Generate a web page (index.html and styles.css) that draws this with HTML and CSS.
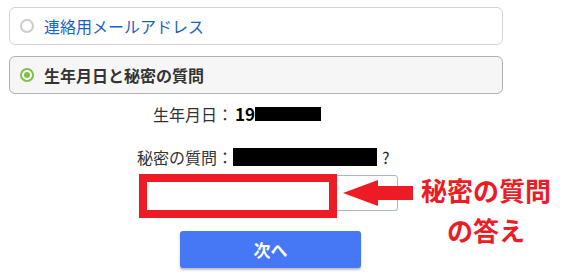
FILE: index.html
```html
<!DOCTYPE html>
<html lang="ja">
<head>
  <meta charset="UTF-8">
  <meta name="viewport" content="width=device-width, initial-scale=1.0">
  <title>本人確認</title>
  <link rel="stylesheet" href="styles.css">
</head>
<body>
  <div class="page">
    <div class="choices">
      <label class="choice">
        <span class="radio"></span>
        <span class="choice-text link">連絡用メールアドレス</span>
      </label>
      <label class="choice selected">
        <span class="radio checked"></span>
        <span class="choice-text">生年月日と秘密の質問</span>
      </label>
    </div>

    <div class="secret">
      <div class="info">
        <span class="info-label">生年月日：</span>
        <span class="info-value"><b>19</b><span class="mask mask-date"></span></span>
        <span class="info-label">秘密の質問：</span>
        <span class="info-value"><span class="mask mask-question"></span>?</span>
      </div>

      <input class="answer" type="text">

      <button class="next-button">次へ</button>
    </div>

    <!-- annotation drawn over the form -->
    <div class="mark-box"></div>
    <svg class="mark-arrow" width="70" height="26" viewBox="0 0 70 26">
      <polygon points="0,13 35,0 35,6 70,6 70,20 35,20 35,26" fill="#ed1c24"/>
    </svg>
    <div class="mark-text">秘密の質問<br>の答え</div>
  </div>
</body>
</html>
```

FILE: styles.css
```css
body {
  margin: 0;
  font-family: "Noto Sans CJK JP", "Noto Sans", sans-serif;
  color: #333333;
  background: #ffffff;
}

.page {
  position: relative;
  width: 569px;
  height: 277px;
  padding: 7px 0 0 9px;
  box-sizing: border-box;
}

.choices {
  display: flex;
  flex-direction: column;
  gap: 11px;
  width: 494px;
}

.choice {
  display: flex;
  align-items: center;
  gap: 10px;
  height: 38px;
  box-sizing: border-box;
  padding-left: 10px;
  border: 1px solid #d4d4d4;
  border-radius: 6px;
  background: #ffffff;
  font-size: 16px;
}

.choice.selected {
  border-color: #b0b0b0;
  background: #f6f6f6;
}

.radio {
  flex: none;
  width: 14px;
  height: 14px;
  border: 2px solid #cdcdcd;
  border-radius: 50%;
  box-sizing: border-box;
  background: #ffffff;
  display: flex;
  align-items: center;
  justify-content: center;
}

.radio.checked {
  border-color: #7cc242;
}

.radio.checked::after {
  content: "";
  width: 6px;
  height: 6px;
  border-radius: 50%;
  background: #7cc242;
}

.choice-text {
  line-height: 20px;
}

.choice-text.link {
  color: #1a5fcc;
}

.selected .choice-text {
  font-weight: 700;
}

.secret {
  display: flex;
  flex-direction: column;
  align-items: flex-start;
}

.info {
  display: grid;
  grid-template-columns: 224px auto;
  row-gap: 19px;
  margin-top: 8px;
  font-size: 16px;
  line-height: 24px;
}

.info-label {
  text-align: right;
}

.info-value {
  display: flex;
  align-items: center;
  color: #222222;
}

.info-value b {
  margin-left: 2px;
  color: #000000;
  font-size: 17px;
}

.mask {
  display: inline-block;
  background: #000000;
}

.mask-date {
  width: 66px;
  height: 14px;
}

.mask-question {
  width: 144px;
  height: 18px;
  margin-right: 5px;
}

.answer {
  width: 258px;
  height: 36px;
  box-sizing: border-box;
  margin: 6px 0 0 131px;
  border: 1px solid #a9b6c6;
  border-radius: 3px;
  background: #ffffff;
}

.next-button {
  width: 181px;
  height: 37px;
  margin: 20px 0 0 171px;
  border: none;
  border-radius: 3px;
  background: #4677f5;
  box-shadow: 0 2px 2px rgba(0, 0, 0, 0.25);
  color: #ffffff;
  font-family: "Noto Sans CJK JP", sans-serif;
  font-size: 17px;
  font-weight: 700;
  cursor: pointer;
}

.mark-box {
  position: absolute;
  left: 139px;
  top: 174px;
  width: 198px;
  height: 44px;
  box-sizing: border-box;
  border: 8px solid #ed1c24;
}

.mark-arrow {
  position: absolute;
  left: 343px;
  top: 180px;
}

.mark-text {
  position: absolute;
  left: 416px;
  top: 170px;
  width: 140px;
  text-align: center;
  color: #ed1c24;
  font-size: 26px;
  font-weight: 700;
  line-height: 40px;
}
```
